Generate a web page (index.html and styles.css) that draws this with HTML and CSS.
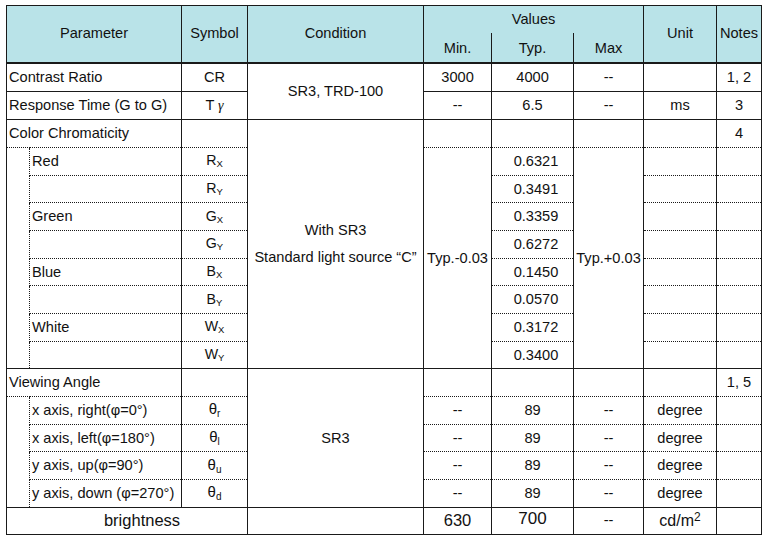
FILE: index.html
```html
<!DOCTYPE html>
<html lang="en">
<head>
<meta charset="utf-8">
<title>Optical Characteristics</title>
<link rel="stylesheet" href="styles.css">
</head>
<body>
<div class="page">
<table class="spec">
  <colgroup>
    <col class="c-ind"><col class="c-par"><col class="c-sym"><col class="c-cond">
    <col class="c-min"><col class="c-typ"><col class="c-max"><col class="c-unit"><col class="c-note">
  </colgroup>
  <thead>
    <tr class="h1">
      <th colspan="2" rowspan="2">Parameter</th>
      <th rowspan="2">Symbol</th>
      <th rowspan="2">Condition</th>
      <th colspan="3">Values</th>
      <th rowspan="2">Unit</th>
      <th rowspan="2">Notes</th>
    </tr>
    <tr class="h2">
      <th>Min.</th>
      <th>Typ.</th>
      <th>Max</th>
    </tr>
  </thead>
  <tbody>
    <tr class="r29 first">
      <td colspan="2" class="lft">Contrast Ratio</td>
      <td>CR</td>
      <td rowspan="2">SR3, TRD-100</td>
      <td>3000</td>
      <td>4000</td>
      <td>--</td>
      <td></td>
      <td>1, 2</td>
    </tr>
    <tr class="r28">
      <td colspan="2" class="lft">Response Time (G to G)</td>
      <td>T <span class="gamma">γ</span></td>
      <td>--</td>
      <td>6.5</td>
      <td>--</td>
      <td>ms</td>
      <td>3</td>
    </tr>
    <tr class="r28">
      <td colspan="2" class="lft">Color Chromaticity</td>
      <td></td>
      <td rowspan="9" class="cond2">With SR3<br>Standard light source “C”</td>
      <td></td>
      <td></td>
      <td></td>
      <td></td>
      <td>4</td>
    </tr>
    <tr class="rs dot">
      <td rowspan="8" class="ind"></td>
      <td class="lft sub">Red</td>
      <td class="sym">R<span class="sb">X</span></td>
      <td rowspan="8" class="tight">Typ.-0.03</td>
      <td class="chr">0.6321</td>
      <td rowspan="8" class="tight">Typ.+0.03</td>
      <td></td>
      <td></td>
    </tr>
    <tr class="rs dot">
      <td class="lft sub"></td>
      <td class="sym">R<span class="sb">Y</span></td>
      <td class="chr">0.3491</td>
      <td></td>
      <td></td>
    </tr>
    <tr class="rs dot">
      <td class="lft sub">Green</td>
      <td class="sym">G<span class="sb">X</span></td>
      <td class="chr">0.3359</td>
      <td></td>
      <td></td>
    </tr>
    <tr class="rs dot">
      <td class="lft sub"></td>
      <td class="sym">G<span class="sb">Y</span></td>
      <td class="chr">0.6272</td>
      <td></td>
      <td></td>
    </tr>
    <tr class="rs dot">
      <td class="lft sub">Blue</td>
      <td class="sym">B<span class="sb">X</span></td>
      <td class="chr">0.1450</td>
      <td></td>
      <td></td>
    </tr>
    <tr class="rs dot">
      <td class="lft sub"></td>
      <td class="sym">B<span class="sb">Y</span></td>
      <td class="chr">0.0570</td>
      <td></td>
      <td></td>
    </tr>
    <tr class="rs dot">
      <td class="lft sub">White</td>
      <td class="sym">W<span class="sb">X</span></td>
      <td class="chr">0.3172</td>
      <td></td>
      <td></td>
    </tr>
    <tr class="rs dot">
      <td class="lft sub"></td>
      <td class="sym">W<span class="sb">Y</span></td>
      <td class="chr">0.3400</td>
      <td></td>
      <td></td>
    </tr>
    <tr class="rs">
      <td colspan="2" class="lft">Viewing Angle</td>
      <td></td>
      <td rowspan="5">SR3</td>
      <td></td>
      <td></td>
      <td></td>
      <td></td>
      <td>1, 5</td>
    </tr>
    <tr class="rs dot">
      <td rowspan="4" class="ind"></td>
      <td class="lft sub">x axis, right(φ=0°)</td>
      <td class="sym"><span class="theta">θ</span><span class="tsb">r</span></td>
      <td>--</td>
      <td>89</td>
      <td>--</td>
      <td>degree</td>
      <td></td>
    </tr>
    <tr class="rs dot">
      <td class="lft sub">x axis, left(φ=180°)</td>
      <td class="sym"><span class="theta">θ</span><span class="tsb">l</span></td>
      <td>--</td>
      <td>89</td>
      <td>--</td>
      <td>degree</td>
      <td></td>
    </tr>
    <tr class="rs dot">
      <td class="lft sub">y axis, up(φ=90°)</td>
      <td class="sym"><span class="theta">θ</span><span class="tsb">u</span></td>
      <td>--</td>
      <td>89</td>
      <td>--</td>
      <td>degree</td>
      <td></td>
    </tr>
    <tr class="rs dot">
      <td class="lft sub">y axis, down (φ=270°)</td>
      <td class="sym"><span class="theta">θ</span><span class="tsb">d</span></td>
      <td>--</td>
      <td>89</td>
      <td>--</td>
      <td>degree</td>
      <td></td>
    </tr>
    <tr class="rs big">
      <td colspan="3" class="bname">brightness</td>
      <td></td>
      <td>630</td>
      <td class="b700">700</td>
      <td class="bdash">--</td>
      <td class="bunit">cd/m<sup>2</sup></td>
      <td></td>
    </tr>
  </tbody>
</table>
</div>
</body>
</html>
```

FILE: styles.css
```css
body {
  margin: 0;
  background: #ffffff;
  font-family: "Liberation Sans", Arial, sans-serif;
  color: #111111;
}

.page {
  padding: 5px 0 0 6px;
}

.spec {
  border-collapse: collapse;
  table-layout: fixed;
  width: 755px;
  border: 1px solid #1a1a1a;
  font-size: 14.6px;
  line-height: 1.15;
}

.c-ind { width: 23px; }
.c-par { width: 152px; }
.c-sym { width: 66px; }
.c-cond { width: 176px; }
.c-min { width: 68px; }
.c-typ { width: 82px; }
.c-max { width: 70px; }
.c-unit { width: 73px; }
.c-note { width: 45px; }

.spec th,
.spec td {
  padding: 0;
  border-left: 1px solid #1a1a1a;
  border-right: none;
  border-top: 1px solid #1a1a1a;
  border-bottom: none;
  text-align: center;
  vertical-align: middle;
  white-space: nowrap;
  font-weight: normal;
}

.spec thead th {
  background: #b9e3e8;
}

.h1 { height: 27px; }
.h2 { height: 30px; }

.spec .h2 th {
  border-top: none;
  padding-top: 3px;
}

.spec .first td {
  border-top: 2px solid #1a1a1a;
}

.r29 { height: 29px; }
.r28 { height: 28px; }
.rs { height: 27.66px; }

.spec .dot td {
  border-top-style: dotted;
}

.spec td.lft {
  text-align: left;
  padding-left: 2px;
}

.spec td.sub {
  border-left-style: dotted;
}

.cond2 {
  line-height: 27px;
}

.spec td.chr {
  padding-left: 7px;
}

.gamma {
  font-family: "Liberation Serif", "Times New Roman", serif;
  font-style: italic;
  font-size: 14px;
}

.spec td.sym {
  font-size: 14.2px;
}

.sb {
  font-size: 9.5px;
  vertical-align: -2px;
}

.theta {
  font-size: 15px;
}

.tsb {
  font-size: 10px;
  vertical-align: -3px;
}

.big {
  font-size: 16.5px;
}

.spec td.bname {
  padding-left: 30px;
}

.spec td.b700 {
  font-size: 17px;
  padding-bottom: 4px;
}

.bdash {
  font-size: 14.6px;
}

.bunit {
  font-size: 16px;
}

.bunit sup {
  font-size: 12px;
  vertical-align: 5px;
  line-height: 0;
}
```
